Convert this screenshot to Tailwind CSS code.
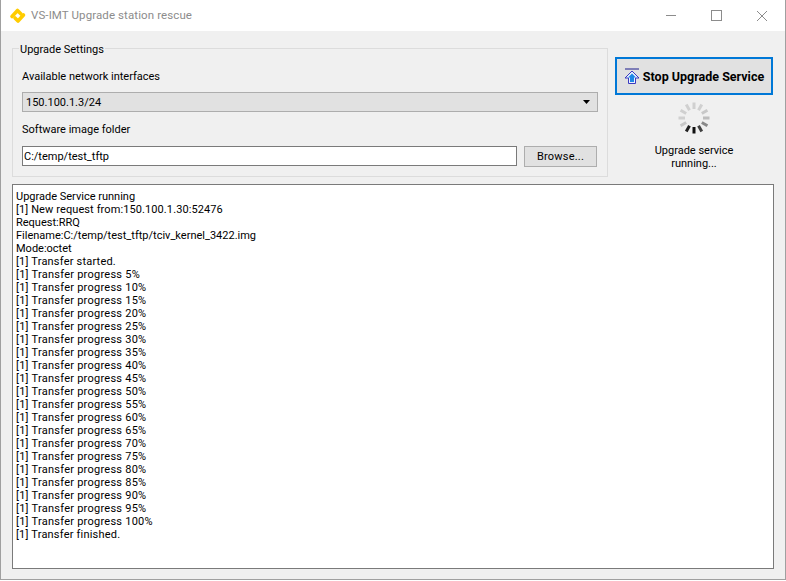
<!DOCTYPE html>
<html>
<head>
<meta charset="utf-8">
<script src="https://cdn.jsdelivr.net/npm/@tailwindcss/browser@4"></script>
</head>
<body class="m-0 bg-white">
<div class="w-[786px] h-[580px] flex flex-col overflow-hidden bg-[#f0f0f0] border-x border-b border-[#a0a0a0] text-[11px] text-black font-['Roboto','Noto_Sans',sans-serif]">
  <div class="h-[31px] shrink-0 bg-white flex items-center">
    <svg class="ml-[8px] w-[18px] h-[18px]" viewBox="0 0 18 18"><path d="M3 9.5 L8.5 3.5 L12 7" fill="none" stroke="#ffcc00" stroke-width="3.6" stroke-linecap="round" stroke-linejoin="round"/><path d="M14.5 8 L9 14 L6 11" fill="none" stroke="#ffcc00" stroke-width="3.6" stroke-linecap="round" stroke-linejoin="round"/></svg>
    <span class="ml-[4px] text-[#8c8c8c] text-[11.5px] tracking-[0.1px]">VS-IMT Upgrade station rescue</span>
    <div class="ml-auto flex items-center gap-[35px] mr-[18px]">
      <div class="w-[10px] h-px bg-[#8c8c8c]"></div>
      <div class="w-[11px] h-[11px] border border-[#8c8c8c]"></div>
      <svg class="w-[10px] h-[10px]" viewBox="0 0 10 10"><path d="M0 0 L10 10 M10 0 L0 10" stroke="#8c8c8c" stroke-width="1" fill="none"/></svg>
    </div>
  </div>
  <div class="flex-1 flex flex-col pl-[11px] pr-[11px] pb-[10px] pt-[17px] gap-[7px] min-h-0">
    <div class="flex gap-[7px] h-[129px] shrink-0">
      <div class="relative w-[596px] h-[129px] border border-[#dcdcdc] px-[9px] pt-[19px] flex flex-col">
        <span class="absolute left-[6px] top-[-8px] bg-[#f0f0f0] px-px leading-[18px] h-[16px]">Upgrade Settings</span>
        <div class="leading-[18px] h-[16px]">Available network interfaces</div>
        <div class="mt-[8px] h-[20px] border border-[#adadad] bg-[#e1e1e1] flex items-center pl-[3px] pr-[7px]">
          <span class="pt-[2px]">150.100.1.3/24</span>
          <svg class="ml-auto w-[7px] h-[4px]" viewBox="0 0 7 4"><path d="M0 0H7L3.5 4Z" fill="#000"/></svg>
        </div>
        <div class="mt-[9px] leading-[18px] h-[16px]">Software image folder</div>
        <div class="mt-[9px] flex gap-[7px] items-start">
          <div class="w-[495px] h-[20px] border border-[#7a7a7a] bg-white pl-px pt-[2px] flex items-center">C:/temp/test_tftp</div>
          <div class="w-[73px] h-[21px] border border-[#adadad] bg-[#e1e1e1] pt-[2px] flex items-center justify-center tracking-[0.2px]">Browse...</div>
        </div>
      </div>
      <div class="w-[158px] shrink-0 flex flex-col items-center pt-[9px]">
        <div class="w-[158px] h-[38px] shrink-0 border-2 border-[#0078d7] bg-[#e1e1e1] flex items-center justify-center gap-[3px] font-bold text-[12.5px]">
          <svg class="w-[16px] h-[17px] shrink-0" viewBox="0 0 16 17"><path d="M1 1H15" stroke="#1a1a8c" stroke-width="1"/><path d="M8 3 L15 10 H11.5 V15.5 H4.5 V10 H1 Z" fill="#e8f0ff" stroke="#3a3ac0" stroke-width="1"/><path d="M8 5.5 L12 9.5 H10 V14 H6 V9.5 H4 Z" fill="#1e88e5"/></svg>
          <span class="whitespace-nowrap pt-[2px]">Stop Upgrade Service</span>
        </div>
        <svg class="mt-[7px] w-[32px] h-[32px] shrink-0" viewBox="-16 -16 32 32">
          <g stroke-width="3" stroke-linecap="butt">
            <line x1="0" y1="-15.5" x2="0" y2="-9" stroke="#d0d0d0"/>
            <line x1="7.75" y1="-13.4" x2="4.5" y2="-7.8" stroke="#d0d0d0"/>
            <line x1="13.4" y1="-7.75" x2="7.8" y2="-4.5" stroke="#c8c8c8"/>
            <line x1="15.5" y1="0" x2="9" y2="0" stroke="#bdbdbd"/>
            <line x1="13.4" y1="7.75" x2="7.8" y2="4.5" stroke="#8a8a8a"/>
            <line x1="7.75" y1="13.4" x2="4.5" y2="7.8" stroke="#404040"/>
            <line x1="0" y1="15.5" x2="0" y2="9" stroke="#101010"/>
            <line x1="-7.75" y1="13.4" x2="-4.5" y2="7.8" stroke="#202020"/>
            <line x1="-13.4" y1="7.75" x2="-7.8" y2="4.5" stroke="#c8c8c8"/>
            <line x1="-15.5" y1="0" x2="-9" y2="0" stroke="#d0d0d0"/>
            <line x1="-13.4" y1="-7.75" x2="-7.8" y2="-4.5" stroke="#d0d0d0"/>
            <line x1="-7.75" y1="-13.4" x2="-4.5" y2="-7.8" stroke="#d0d0d0"/>
          </g>
        </svg>
        <div class="mt-[10px] text-center leading-[13px]">Upgrade service<br>running...</div>
      </div>
    </div>
    <div class="flex-1 min-h-0 border border-[#7a7a7a] bg-white pl-[3px] pt-[5px] leading-[13px] overflow-hidden">
      <div>Upgrade Service running</div>
      <div class="tracking-[0.1px]">[1] New request from:150.100.1.30:52476</div>
      <div>Request:RRQ</div>
      <div>Filename:C:/temp/test_tftp/tciv_kernel_3422.img</div>
      <div>Mode:octet</div>
      <div class="tracking-[0.2px]">[1] Transfer started.</div>
      <div class="tracking-[0.25px]">[1] Transfer progress 5%</div>
      <div class="tracking-[0.25px]">[1] Transfer progress 10%</div>
      <div class="tracking-[0.25px]">[1] Transfer progress 15%</div>
      <div class="tracking-[0.25px]">[1] Transfer progress 20%</div>
      <div class="tracking-[0.25px]">[1] Transfer progress 25%</div>
      <div class="tracking-[0.25px]">[1] Transfer progress 30%</div>
      <div class="tracking-[0.25px]">[1] Transfer progress 35%</div>
      <div class="tracking-[0.25px]">[1] Transfer progress 40%</div>
      <div class="tracking-[0.25px]">[1] Transfer progress 45%</div>
      <div class="tracking-[0.25px]">[1] Transfer progress 50%</div>
      <div class="tracking-[0.25px]">[1] Transfer progress 55%</div>
      <div class="tracking-[0.25px]">[1] Transfer progress 60%</div>
      <div class="tracking-[0.25px]">[1] Transfer progress 65%</div>
      <div class="tracking-[0.25px]">[1] Transfer progress 70%</div>
      <div class="tracking-[0.25px]">[1] Transfer progress 75%</div>
      <div class="tracking-[0.25px]">[1] Transfer progress 80%</div>
      <div class="tracking-[0.25px]">[1] Transfer progress 85%</div>
      <div class="tracking-[0.25px]">[1] Transfer progress 90%</div>
      <div class="tracking-[0.25px]">[1] Transfer progress 95%</div>
      <div class="tracking-[0.25px]">[1] Transfer progress 100%</div>
      <div class="tracking-[0.2px]">[1] Transfer finished.</div>
    </div>
  </div>
</div>
</body>
</html>
